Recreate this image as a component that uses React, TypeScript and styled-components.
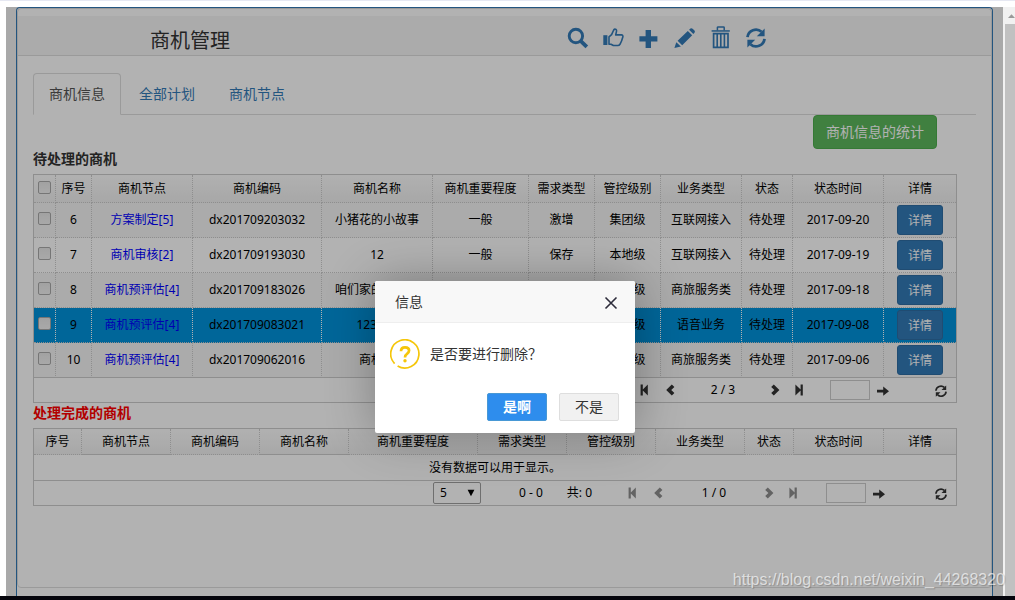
import React from "react";
import styled, { createGlobalStyle, css } from "styled-components";

const Global = createGlobalStyle`
  *, *::before, *::after { box-sizing: border-box; }
  body {
    margin: 0;
    background: #fff;
    color: #333;
    font-family: "Noto Sans", "Noto Sans CJK SC", sans-serif;
    font-size: 14px;
    line-height: 20px;
  }
  button, input, select { font: inherit; color: inherit; margin: 0; }
  button { cursor: pointer; padding: 0; }
`;

const Page = styled.div`
  display: flex;
  flex-direction: column;
  min-height: 100vh;
  border-top: 1px solid #e6e8f2;
  border-bottom: 4px solid #05050c;
  padding: 6px 0 0 6px;
`;

const Viewport = styled.div`
  flex: 1;
  display: flex;
`;

const Frame = styled.main`
  position: relative;
  flex: 1;
  display: flex;
  background: #f3f3f3;
  padding: 0 10px;
`;

const ScrollTrack = styled.div`
  width: 12px;
  display: flex;
  flex-direction: column;
  background: #f1f1f1;
  padding-left: 2px;
`;

const ScrollArrow = styled.svg`
  display: block;
  width: 10px;
  height: 17px;
`;

const ScrollThumb = styled.div`
  flex: 1;
  background: #c1c1c1;
`;

const Card = styled.div`
  flex: 1;
  display: flex;
  background: #fff;
  border: 1px solid #337ab7;
  border-bottom: 0;
  border-radius: 4px 4px 0 0;
  padding-bottom: 8px;
`;

const Panel = styled.section`
  flex: 1;
  min-width: 0;
  border: 1px solid #ddd;
  border-radius: 4px;
  padding-top: 7px;
`;

const Heading = styled.header`
  display: grid;
  grid-template-columns: 417px 1fr;
  align-items: center;
  height: 40px;
  padding-left: 132px;
  background: #f5f5f5;
  border-bottom: 1px solid #ddd;
`;

const Title = styled.h1`
  margin: 0;
  padding-top: 10px;
  font-size: 20px;
  line-height: 24px;
  font-weight: 400;
`;

const Tools = styled.div`
  display: flex;
  gap: 16px;
  padding-top: 4px;
`;

const ToolButton = styled.button`
  display: flex;
  background: none;
  border: 0;
  color: #337ab7;
`;

const Body = styled.div`
  padding: 17px 15px 0;
`;

const Tabs = styled.nav`
  display: flex;
  gap: 2px;
  border-bottom: 1px solid #ddd;
`;

const Tab = styled.a<{ $active?: boolean }>`
  margin-bottom: -1px;
  padding: 10px 15px;
  border: 1px solid transparent;
  border-radius: 4px 4px 0 0;
  color: #337ab7;
  text-decoration: none;
  ${(p) =>
    p.$active &&
    css`
      color: #555;
      background: #fff;
      border-color: #ddd #ddd #fff;
    `}
`;

const Actions = styled.div`
  display: flex;
  justify-content: flex-end;
  padding-right: 39px;
`;

const StatButton = styled.button`
  height: 34px;
  padding: 0 12px;
  color: #fff;
  background: #5cb85c;
  border: 1px solid #4cae4c;
  border-radius: 4px;
`;

const Caption = styled.h2<{ $done?: boolean }>`
  margin: 0 0 5px;
  font-size: 14px;
  line-height: 20px;
  font-weight: 700;
  color: ${(p) => (p.$done ? "#f00" : "#333")};
`;

const Grid = styled.div`
  margin-right: 19px;
  border: 1px solid #ccc;
  color: #000;
  font-size: 12px;
  line-height: 18px;
`;

const Table = styled.table`
  width: 100%;
  table-layout: fixed;
  border-collapse: separate;
  border-spacing: 0;
`;

const Col = styled.col<{ $w: number }>`
  width: ${(p) => p.$w}px;
`;

const Th = styled.th<{ $tall?: boolean; $solid?: boolean }>`
  height: ${(p) => (p.$tall ? 28 : 26)}px;
  padding: 0;
  font-weight: 400;
  white-space: nowrap;
  border-right: 1px dotted #ccc;
  border-bottom: 1px ${(p) => (p.$solid ? "solid" : "dotted")} #ccc;
  &:last-child { border-right: 0; }
`;

const HeadRow = styled.tr`
  background: linear-gradient(#fdfdfd, #f0f0f0);
`;

const Row = styled.tr<{ $selected?: boolean }>`
  background: #fff;
  &:nth-child(odd) { background: #f5f5f5; }
  &&& { ${(p) => p.$selected && "background: #0093dc;"} }
  &:last-child td { border-bottom: 1px solid #ccc; }
`;

const Td = styled.td<{ $light?: boolean }>`
  height: 35px;
  padding: 0;
  text-align: center;
  white-space: nowrap;
  overflow: hidden;
  border-right: 1px dotted ${(p) => (p.$light ? "#fff" : "#ccc")};
  border-bottom: 1px dotted #ccc;
  &:last-child { border-right: 0; }
`;

const EmptyTd = styled.td`
  height: 26px;
  padding: 0;
  text-align: center;
  border-bottom: 1px solid #ccc;
`;

const Check = styled.input`
  appearance: none;
  display: block;
  width: 13px;
  height: 13px;
  margin: 0 auto 3px 4px;
  border: 1px solid #aaa;
  border-radius: 2px;
  background: linear-gradient(#e8e8e8, #f2f2f2);
`;

const NodeLink = styled.a`
  color: #00f;
  text-decoration: none;
`;

const DetailButton = styled.button`
  display: block;
  width: 46px;
  height: 30px;
  margin: 0 auto;
  padding-top: 2px;
  color: #fff;
  background: #337ab7;
  border: 1px solid #2e6da4;
  border-radius: 3px;
`;

const PagerBar = styled.div`
  display: flex;
  align-items: center;
  justify-content: flex-end;
  height: 24px;
  padding-right: 9px;
`;

const SizeBox = styled.div`
  position: relative;
  margin-right: 38px;
`;

const SizeSelect = styled.select`
  appearance: none;
  display: block;
  width: 48px;
  height: 22px;
  padding: 0 6px;
  background: #fff;
  border: 1px solid #a0a0a0;
  border-radius: 2px;
`;

const SizeArrow = styled.svg`
  position: absolute;
  right: 6px;
  top: 7px;
  pointer-events: none;
`;

const Range = styled.span`
  margin-right: 24px;
`;

const Total = styled.span`
  margin-right: 35px;
`;

const PagerButton = styled.button`
  display: flex;
  background: none;
  border: 0;
  color: #333;
  &:disabled { opacity: 0.55; }
`;

const Pair = styled.div<{ $gap: number; $after?: number }>`
  display: flex;
  align-items: center;
  gap: ${(p) => p.$gap}px;
  margin-right: ${(p) => p.$after || 0}px;
`;

const PageText = styled.span<{ $wide?: boolean }>`
  width: ${(p) => (p.$wide ? 98 : 92)}px;
  text-align: center;
`;

const PageInput = styled.input`
  width: 40px;
  height: 20px;
  padding: 0 4px;
  background: #fff;
  border: 1px solid #ccc;
`;

const Shade = styled.div`
  position: absolute;
  inset: 0;
  display: flex;
  justify-content: center;
  align-items: flex-start;
  padding: 274px 0 0 1px;
  background: rgba(0, 0, 0, 0.3);
`;

const Dialog = styled.div`
  width: 260px;
  background: #fff;
  border-radius: 2px;
  box-shadow: 1px 1px 50px rgba(0, 0, 0, 0.3);
`;

const DialogHead = styled.div`
  display: flex;
  align-items: center;
  justify-content: space-between;
  height: 42px;
  padding: 0 17px 0 20px;
  background: #f8f8f8;
  border-bottom: 1px solid #eee;
  border-radius: 2px 2px 0 0;
`;

const CloseButton = styled.button`
  display: flex;
  margin-top: 2px;
  background: none;
  border: 0;
  color: #2d2c3b;
`;

const DialogBody = styled.div`
  display: flex;
  align-items: center;
  gap: 10px;
  padding: 16px 15px 24px;
`;

const DialogFoot = styled.div`
  display: flex;
  justify-content: flex-end;
  gap: 12px;
  padding: 0 16px 12px;
`;

const DialogButton = styled.button<{ $primary?: boolean }>`
  width: 60px;
  height: 28px;
  border: 1px solid ${(p) => (p.$primary ? "#4898d5" : "#dedede")};
  border-radius: 2px;
  background: ${(p) => (p.$primary ? "#2e8ded" : "#f1f1f1")};
  color: ${(p) => (p.$primary ? "#fff" : "#333")};
  font-weight: ${(p) => (p.$primary ? 700 : 400)};
`;

const Watermark = styled.div`
  position: absolute;
  right: 10px;
  bottom: 10px;
  font-family: "Liberation Sans", sans-serif;
  font-size: 16px;
  line-height: 20px;
  color: rgba(255, 255, 255, 0.65);
  text-shadow: 1px 1px 1px rgba(0, 0, 0, 0.2);
`;

const RefreshShape = () => (
  <>
    <g>
      <path d="M1.5 9.2A8.5 8.5 0 0 1 15.6 3.8" fill="none" stroke="currentColor" strokeWidth="2.8" />
      <path d="M18.6 .6V8.2H10.8Z" fill="currentColor" />
    </g>
    <g transform="rotate(180 10 10)">
      <path d="M1.5 9.2A8.5 8.5 0 0 1 15.6 3.8" fill="none" stroke="currentColor" strokeWidth="2.8" />
      <path d="M18.6 .6V8.2H10.8Z" fill="currentColor" />
    </g>
  </>
);

const toolShapes: { label: string; shape: React.ReactNode }[] = [
  {
    label: "查询",
    shape: (
      <>
        <circle cx="8.9" cy="8" r="6.7" fill="none" stroke="currentColor" strokeWidth="2.9" />
        <path d="M13.6 12.9L19.8 18.9" stroke="currentColor" strokeWidth="3.8" />
      </>
    ),
  },
  {
    label: "审批",
    shape: (
      <>
        <path d="M.3 7.2H4.4V17H.3Z" fill="currentColor" />
        <path
          d="M6 8.8L8.6 6.6L10.7 2Q11.6 .6 13 1.4Q13.8 2 13.5 3.4L12.7 6.9H18.4Q20.2 7 19.9 8.8Q18.6 13.8 17 16.2Q16.2 17.4 14.8 17.5H10.4L8 16.2H6Z"
          fill="none"
          stroke="currentColor"
          strokeWidth="1.6"
          strokeLinejoin="round"
        />
      </>
    ),
  },
  { label: "新增", shape: <path d="M6.6 2H12V8.3H18.4V13.6H12V20H6.6V13.6H.4V8.3H6.6Z" fill="currentColor" /> },
  {
    label: "编辑",
    shape: (
      <path
        d="M-.6 20L1.3 14.2L5.9 18.4ZM2.6 12.8L12.8 2.9L17.2 7.2L7.2 17.2ZM14.1 1.8L15.4 .6Q16.5 -.3 17.6 .7L19.5 2.6Q20.4 3.7 19.5 4.8L18.3 6Z"
        fill="currentColor"
      />
    ),
  },
  {
    label: "删除",
    shape: (
      <>
        <path d="M.6 2.2H18.8V3.7H.6Z" fill="currentColor" />
        <path d="M6.4 2.6V-.4Q6.4 -1.1 7.1 -1.1H12.5Q13.2 -1.1 13.2 -.4V2.6" fill="none" stroke="currentColor" strokeWidth="1.5" />
        <path d="M2.6 5.6H17V19.3H2.6Z" fill="none" stroke="currentColor" strokeWidth="1.7" />
        <path d="M6.2 6V19M9.8 6V19M13.4 6V19" stroke="currentColor" strokeWidth="1.6" />
      </>
    ),
  },
  {
    label: "刷新",
    shape: (
      <g transform="translate(-1 0)">
        <RefreshShape />
      </g>
    ),
  },
];

const Glyph = ({ d }: { d: string }) => (
  <svg width="12" height="12" viewBox="0 0 12 12" aria-hidden="true">
    <path d={d} fill="currentColor" />
  </svg>
);

const glyphs = {
  first: "M1.6 .6H3.8V5.4L8.8 .6V11.4L3.8 6.6V11.4H1.6Z",
  prev: "M6.8 .4L9.4 3L6.2 6L9.4 9L6.8 11.6L1.2 6Z",
  next: "M4.8 .4L2.2 3L5.4 6L2.2 9L4.8 11.6L10.4 6Z",
  last: "M9.8 .6H7.6V5.4L2.4 .6V11.4L7.6 6.6V11.4H9.8Z",
  go: "M0 5.8H6.2V2.6L12 7.2L6.2 11.8V8.6H0Z",
};

interface PagerProps {
  range: string;
  total: number;
  page: string;
  wide?: boolean;
}

const Pager = ({ range, total, page, wide }: PagerProps) => (
  <PagerBar>
    <SizeBox>
      <SizeSelect aria-label="每页条数" defaultValue="5">
        <option>5</option>
        <option>10</option>
      </SizeSelect>
      <SizeArrow width="8" height="8" viewBox="0 0 8 8" aria-hidden="true">
        <path d="M.6 .8H7.4L4 7.2Z" fill="#000" />
      </SizeArrow>
    </SizeBox>
    <Range>{range}</Range>
    <Total>共: {total}</Total>
    <Pair $gap={14}>
      <PagerButton aria-label="首页" disabled={wide}><Glyph d={glyphs.first} /></PagerButton>
      <PagerButton aria-label="上一页" disabled={wide}><Glyph d={glyphs.prev} /></PagerButton>
    </Pair>
    <PageText $wide={wide}>{page}</PageText>
    <Pair $gap={12} $after={wide ? 27 : 25}>
      <PagerButton aria-label="下一页" disabled={wide}><Glyph d={glyphs.next} /></PagerButton>
      <PagerButton aria-label="末页" disabled={wide}><Glyph d={glyphs.last} /></PagerButton>
    </Pair>
    <Pair $gap={7} $after={wide ? 50 : 46}>
      <PageInput aria-label="页码" type="text" />
      <PagerButton aria-label="跳转"><Glyph d={glyphs.go} /></PagerButton>
    </Pair>
    <PagerButton aria-label="刷新">
      <svg width="12" height="12" viewBox="0 0 20 20" overflow="visible" aria-hidden="true">
        <g transform="translate(0 2)">
          <RefreshShape />
        </g>
      </svg>
    </PagerButton>
  </PagerBar>
);

const pendingCols: [string, number][] = [
  ["序号", 36],
  ["商机节点", 101],
  ["商机编码", 129],
  ["商机名称", 111],
  ["商机重要程度", 96],
  ["需求类型", 66],
  ["管控级别", 66],
  ["业务类型", 81],
  ["状态", 51],
  ["状态时间", 91],
  ["详情", 72],
];

const doneCols: [string, number, boolean][] = [
  ["序号", 48, false],
  ["商机节点", 89, true],
  ["商机编码", 89, false],
  ["商机名称", 89, true],
  ["商机重要程度", 129, false],
  ["需求类型", 89, true],
  ["管控级别", 89, false],
  ["业务类型", 89, true],
  ["状态", 49, false],
  ["状态时间", 90, true],
  ["详情", 72, true],
];

const rows = [
  ["6", "方案制定[5]", "dx201709203032", "小猪花的小故事", "一般", "激增", "集团级", "互联网接入", "待处理", "2017-09-20"],
  ["7", "商机审核[2]", "dx201709193030", "12", "一般", "保存", "本地级", "互联网接入", "待处理", "2017-09-19"],
  ["8", "商机预评估[4]", "dx201709183026", "咱们家的小故事", "一般", "激增", "集团级", "商旅服务类", "待处理", "2017-09-18"],
  ["9", "商机预评估[4]", "dx201709083021", "123456", "一般", "激增", "本地级", "语音业务", "待处理", "2017-09-08"],
  ["10", "商机预评估[4]", "dx201709062016", "商机一", "一般", "保存", "集团级", "商旅服务类", "待处理", "2017-09-06"],
];

export default function App() {
  return (
    <Page>
      <Global />
      <Viewport>
        <Frame>
          <Card>
            <Panel>
              <Heading>
                <Title>商机管理</Title>
                <Tools>
                  {toolShapes.map((t) => (
                    <ToolButton key={t.label} aria-label={t.label}>
                      <svg width="20" height="20" viewBox="0 0 20 20" overflow="visible" aria-hidden="true">
                        {t.shape}
                      </svg>
                    </ToolButton>
                  ))}
                </Tools>
              </Heading>
              <Body>
                <Tabs>
                  <Tab href="#info" $active>商机信息</Tab>
                  <Tab href="#plans">全部计划</Tab>
                  <Tab href="#nodes">商机节点</Tab>
                </Tabs>
                <Actions>
                  <StatButton>商机信息的统计</StatButton>
                </Actions>
                <Caption>待处理的商机</Caption>
                <Grid>
                  <Table>
                    <colgroup>
                      <Col $w={22} />
                      {pendingCols.map(([name, w]) => <Col key={name} $w={w} />)}
                    </colgroup>
                    <thead>
                      <HeadRow>
                        <Th $tall><Check type="checkbox" aria-label="全选" /></Th>
                        {pendingCols.map(([name]) => <Th key={name} $tall>{name}</Th>)}
                      </HeadRow>
                    </thead>
                    <tbody>
                      {rows.map((cells) => {
                        const selected = cells[0] === "9";
                        return (
                          <Row key={cells[0]} $selected={selected}>
                            <Td $light={selected}><Check type="checkbox" aria-label={`选择 ${cells[0]}`} /></Td>
                            {cells.map((text, i) => (
                              <Td key={i} $light={selected}>
                                {i === 1 ? <NodeLink href="#node">{text}</NodeLink> : text}
                              </Td>
                            ))}
                            <Td><DetailButton>详情</DetailButton></Td>
                          </Row>
                        );
                      })}
                    </tbody>
                  </Table>
                  <Pager range="6 - 10" total={13} page="2 / 3" />
                </Grid>
                <Caption $done>处理完成的商机</Caption>
                <Grid>
                  <Table>
                    <colgroup>
                      {doneCols.map(([name, w]) => <Col key={name} $w={w} />)}
                    </colgroup>
                    <thead>
                      <HeadRow>
                        {doneCols.map(([name, , solid]) => <Th key={name} $solid={solid}>{name}</Th>)}
                      </HeadRow>
                    </thead>
                    <tbody>
                      <tr>
                        <EmptyTd colSpan={doneCols.length}>没有数据可以用于显示。</EmptyTd>
                      </tr>
                    </tbody>
                  </Table>
                  <Pager range="0 - 0" total={0} page="1 / 0" wide />
                </Grid>
              </Body>
            </Panel>
          </Card>
          <Shade>
            <Dialog role="dialog" aria-label="信息">
              <DialogHead>
                <span>信息</span>
                <CloseButton aria-label="关闭">
                  <svg width="14" height="14" viewBox="0 0 14 14" aria-hidden="true">
                    <path d="M1.5 1.5L12.5 12.5M12.5 1.5L1.5 12.5" stroke="currentColor" strokeWidth="1.6" />
                  </svg>
                </CloseButton>
              </DialogHead>
              <DialogBody>
                <svg width="30" height="30" viewBox="0 0 30 30" aria-hidden="true">
                  <path d="M7.6 27A14.1 14.1 0 1 0 4.6 24.6" fill="none" stroke="#f5c60a" strokeWidth="1.7" />
                  <path d="M11 12.2Q11 8.3 15 8.3Q19.1 8.3 19.1 11.6Q19.1 13.4 17 14.8Q15 16.1 15 18.6" fill="none" stroke="#f5c60a" strokeWidth="2.7" />
                  <circle cx="15" cy="21.8" r="1.7" fill="#f5c60a" />
                </svg>
                <span>是否要进行删除？</span>
              </DialogBody>
              <DialogFoot>
                <DialogButton $primary>是啊</DialogButton>
                <DialogButton>不是</DialogButton>
              </DialogFoot>
            </Dialog>
          </Shade>
        </Frame>
        <ScrollTrack>
          <ScrollArrow viewBox="0 0 10 17" aria-hidden="true">
            <path d="M3 11L6.5 7.2L10 11Z" fill="#999" />
          </ScrollArrow>
          <ScrollThumb />
        </ScrollTrack>
      </Viewport>
      <Watermark>https://blog.csdn.net/weixin_44268320</Watermark>
    </Page>
  );
}
